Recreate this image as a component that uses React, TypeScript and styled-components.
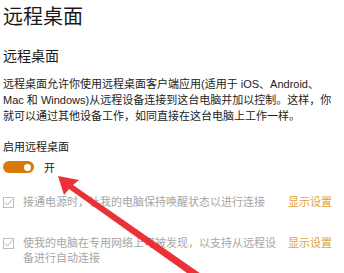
import React from "react";
import styled, { createGlobalStyle } from "styled-components";

const Global = createGlobalStyle`
  html, body { margin: 0; padding: 0; background: #fff; }
  body { font-family: "Liberation Sans", "Noto Sans CJK SC", sans-serif; color: #1a1a1a; }
`;

const Page = styled.div`
  position: relative;
  width: 344px;
  height: 273px;
  overflow: hidden;
  padding: 3px 12px 0 3px;
  box-sizing: border-box;
`;

const Title = styled.h1`
  margin: 0;
  font-size: 20px;
  font-weight: 400;
  line-height: 28px;
`;

const Subtitle = styled.h2`
  margin: 15px 0 0;
  font-size: 14px;
  font-weight: 400;
  line-height: 20px;
`;

const Paragraph = styled.p`
  margin: 10px 0 0;
  font-size: 11px;
  line-height: 16px;
  color: #222;
  white-space: nowrap;
`;

const Label = styled.div`
  margin-top: 15px;
  font-size: 11px;
  line-height: 16px;
`;

const ToggleRow = styled.div`
  display: flex;
  align-items: center;
  gap: 10px;
  margin-top: 4px;
  height: 16px;
`;

const Track = styled.div`
  width: 31px;
  height: 12px;
  border-radius: 6px;
  background: #d97a08;
  display: flex;
  align-items: center;
  justify-content: flex-end;
  padding-right: 3px;
  box-sizing: border-box;
`;

const Knob = styled.div`
  width: 7px;
  height: 7px;
  border-radius: 50%;
  background: #fff;
`;

const ToggleText = styled.span`
  font-size: 11px;
`;

const OptionRow = styled.div<{ $top: number }>`
  display: grid;
  grid-template-columns: 20px 1fr 50px;
  margin-top: ${(p) => p.$top}px;
  font-size: 11px;
  line-height: 15px;
`;

const Box = styled.div`
  width: 11px;
  height: 11px;
  border: 1px solid #bdbdbd;
  box-sizing: border-box;
  margin-top: 2px;
  display: flex;
  align-items: center;
  justify-content: center;
`;

const OptionText = styled.div`
  color: #a6a6a6;
  white-space: nowrap;
`;

const Link = styled.div`
  color: #e0a33a;
  text-align: right;
  white-space: nowrap;
`;

const Overlay = styled.svg`
  position: absolute;
  left: 0;
  top: 0;
  pointer-events: none;
`;

const Check = () => (
  <svg width="9" height="9" viewBox="0 0 9 9">
    <path d="M1 4.5 L3.5 7 L8 1.5" fill="none" stroke="#b0b0b0" strokeWidth="1" />
  </svg>
);

export default function App() {
  return (
    <>
      <Global />
      <Page>
        <Title>远程桌面</Title>
        <Subtitle>远程桌面</Subtitle>
        <Paragraph>
          远程桌面允许你使用远程桌面客户端应用(适用于 iOS、Android、
          <br />
          Mac 和 Windows)从远程设备连接到这台电脑并加以控制。这样，你
          <br />
          就可以通过其他设备工作，如同直接在这台电脑上工作一样。
        </Paragraph>
        <Label>启用远程桌面</Label>
        <ToggleRow>
          <Track>
            <Knob />
          </Track>
          <ToggleText>开</ToggleText>
        </ToggleRow>
        <OptionRow $top={20}>
          <Box>
            <Check />
          </Box>
          <OptionText>接通电源时，让我的电脑保持唤醒状态以进行连接</OptionText>
          <Link>显示设置</Link>
        </OptionRow>
        <OptionRow $top={26}>
          <Box>
            <Check />
          </Box>
          <OptionText>
            使我的电脑在专用网络上可被发现，以支持从远程设
            <br />
            备进行自动连接
          </OptionText>
          <Link>显示设置</Link>
        </OptionRow>
        <Overlay width="344" height="273" viewBox="0 0 344 273">
          <path
            d="M58 176 L79 180 L73 185 L204 276 L194 278 L69 189 L64 195 Z"
            fill="#e8262b"
            opacity="0.95"
          />
        </Overlay>
      </Page>
    </>
  );
}
